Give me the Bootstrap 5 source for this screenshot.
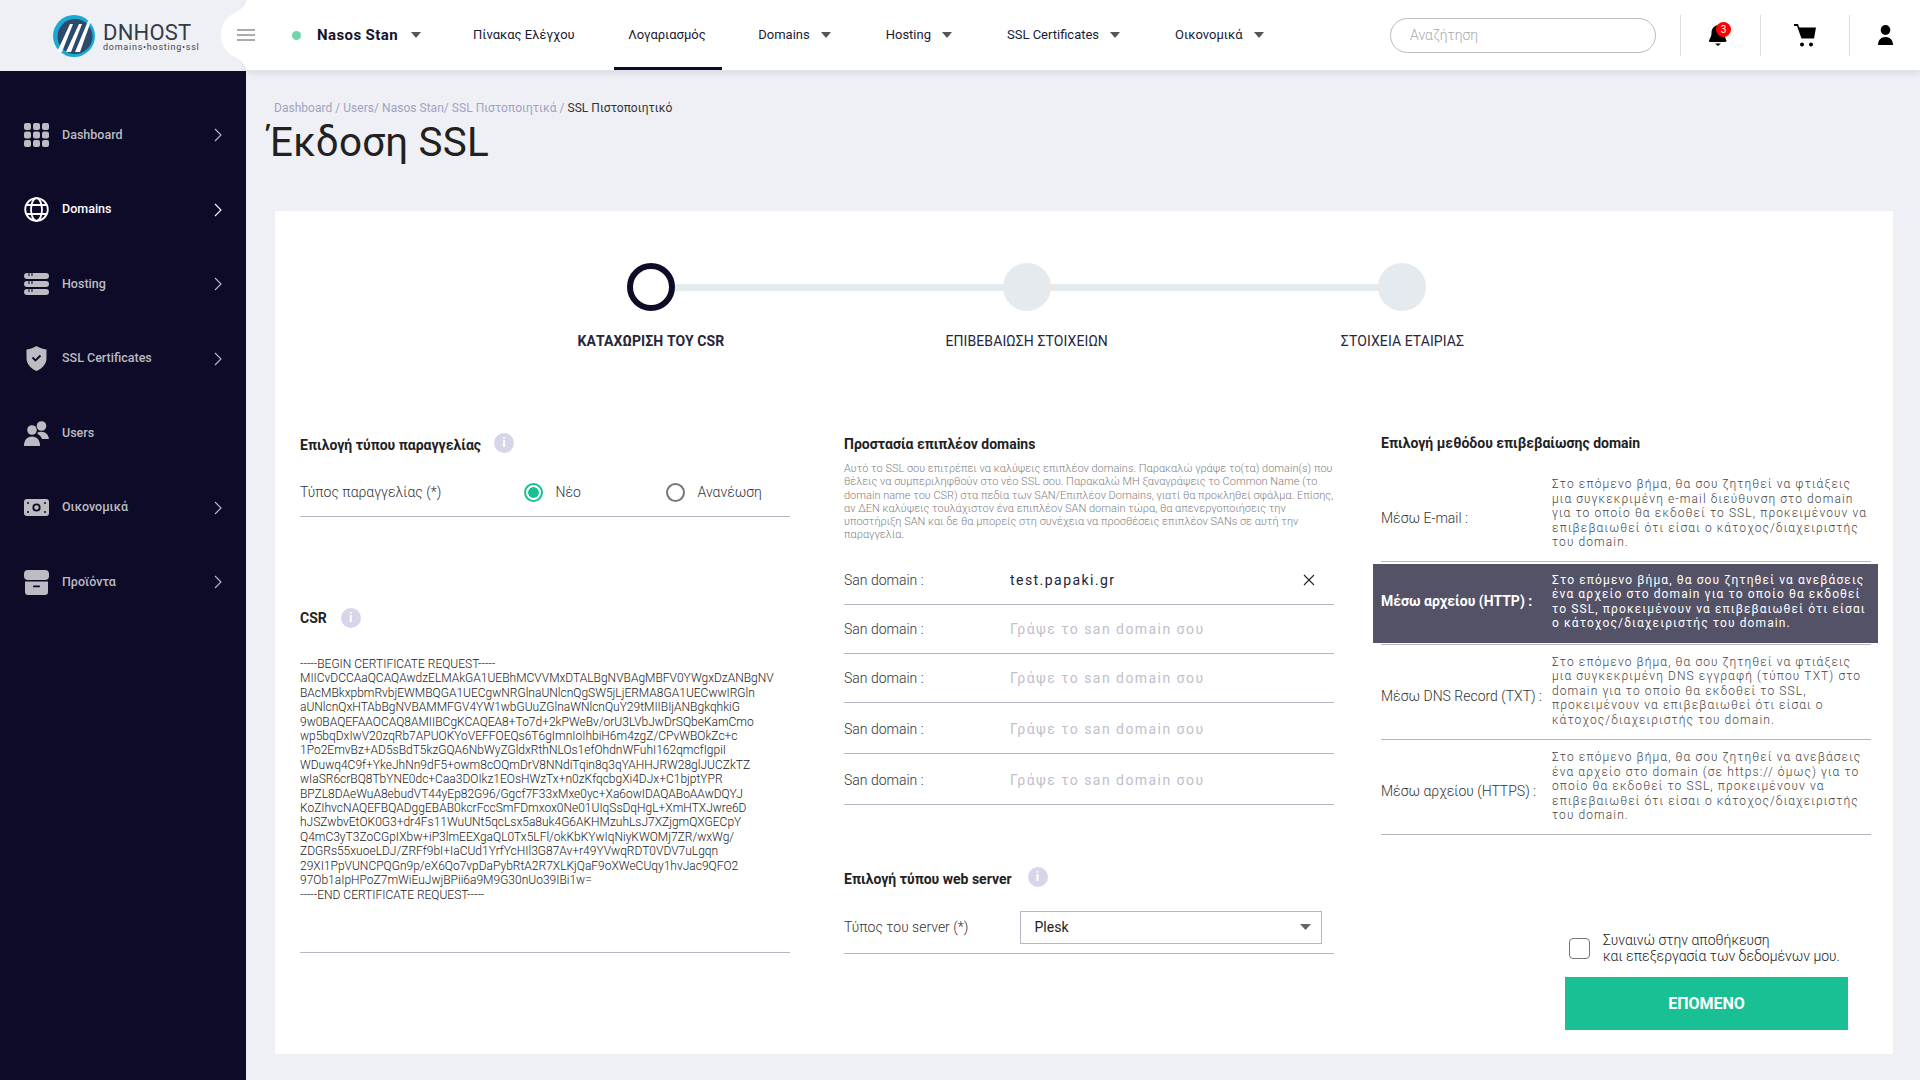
<!DOCTYPE html>
<html lang="el">
<head>
    <meta charset="UTF-8">
    <meta name="viewport" content="width=device-width, initial-scale=1.0">
    <title>Έκδοση SSL</title>
    <link href="https://cdn.jsdelivr.net/npm/bootstrap@5.3.3/dist/css/bootstrap.min.css" rel="stylesheet">
    <style>
        :root {
            --dark-navy: #0d0b27;
            --page-bg: #eef0f6;
            --line-color: #b5b5c3;
            --green: #19c093;
        }

        html, body {
            height: 100%;
        }

        body {
            background: var(--page-bg);
            font-family: Roboto, "Liberation Sans", sans-serif;
            font-size: 14px;
            color: #333;
            overflow: hidden;
        }

        /* Top bar */
        .top-bar {
            height: 70px;
            position: relative;
            z-index: 5;
        }

        .logo-area {
            width: 246px;
            height: 71px;
            padding-left: 53px;
            background: var(--page-bg);
        }

        .logo-words {
            padding-top: 4px;
        }

        .logo-name {
            font-size: 22px;
            line-height: 20px;
            color: #353b46;
            letter-spacing: 0.2px;
        }

        .logo-sub {
            font-size: 9px;
            line-height: 10px;
            color: #3f4652;
            letter-spacing: 0.75px;
            margin-top: -1px;
            white-space: nowrap;
        }

        .notch-shape {
            position: absolute;
            left: 216px;
            top: 0;
        }

        .top-nav {
            background: #fff;
            box-shadow: 0 2px 8px rgba(30, 30, 60, 0.12);
            min-width: 0;
        }

        .menu-lines {
            width: 18px;
            margin-left: -9px;
            margin-right: 37px;
            position: relative;
            z-index: 2;
        }

        .menu-lines span {
            display: block;
            height: 2px;
            background: #ababab;
            margin: 3px 0;
        }

        .status-dot {
            width: 9px;
            height: 9px;
            border-radius: 50%;
            background: #6fd6ab;
            margin-right: 16px;
        }

        .user-name {
            font-size: 15px;
            font-weight: 700;
            color: #15132e;
            letter-spacing: 0.4px;
            margin-right: 38px;
        }

        .top-bar .nav-link {
            height: 70px;
            padding: 0 14px;
            display: flex;
            align-items: center;
            font-size: 13px;
            color: #1b1a33;
            margin-right: 27px;
            white-space: nowrap;
        }

        .top-bar .nav-link.tab-first {
            margin-right: 25.5px;
        }

        .top-bar .nav-link.active-tab {
            box-shadow: inset 0 -3px 0 var(--dark-navy);
            padding-right: 16px;
            margin-right: 22.5px;
        }

        .dropdown-toggle::after {
            border-top: 6px solid #555;
            border-left: 5px solid transparent;
            border-right: 5px solid transparent;
            border-bottom: 0;
            margin-left: 11px;
        }

        .user-name.dropdown-toggle::after {
            margin-left: 13px;
            vertical-align: 2px;
        }

        .search-box {
            width: 266px;
            height: 35px;
            border: 1px solid #bbb;
            border-radius: 18px;
            padding: 0 19px;
            font-size: 14px;
            font-weight: 300;
            margin-right: 24px;
        }

        .search-box::placeholder {
            color: #a9a9ad;
        }

        .tool-slot {
            height: 41px;
            border-left: 1px solid #ddd;
            position: relative;
        }

        .slot-bell {
            width: 80px;
            padding-left: 28px;
        }

        .slot-cart {
            width: 89px;
            padding-left: 33px;
        }

        .slot-user {
            width: 71px;
            padding-left: 28px;
        }

        .bell-count {
            position: absolute;
            left: 35px;
            top: 7px;
            width: 15px;
            height: 15px;
            border-radius: 50%;
            background: #f00;
            color: #fff;
            font-size: 10px;
            line-height: 15px;
            text-align: center;
        }

        /* Sidebar */
        .side-menu {
            width: 246px;
            height: 1010px;
            background: var(--dark-navy);
            padding-top: 28px;
            flex-shrink: 0;
        }

        .side-item {
            height: 74.5px;
            padding: 0 24px;
            color: #bcbcc2;
            font-size: 12.5px;
            font-weight: 500;
            text-decoration: none;
        }

        .side-item.current {
            color: #fff;
        }

        .side-icon {
            width: 25px;
            margin-right: 13px;
            flex-shrink: 0;
        }

        .side-arrow {
            margin-left: auto;
        }

        /* Page */
        .page-body {
            padding: 30px 27px 0 28px;
            min-width: 0;
        }

        .crumbs {
            font-size: 12px;
            line-height: 16px;
            letter-spacing: 0.03px;
            color: #a3a2bd;
        }

        .crumbs span {
            color: #333;
        }

        .page-title {
            font-size: 40.4px;
            line-height: 44px;
            font-weight: 400;
            letter-spacing: 0.2px;
            color: #212121;
            margin: 5px 0 46px -6px;
        }

        .form-panel {
            height: 843px;
            margin-left: 1px;
            background: #fff;
            padding-top: 52px;
        }

        /* Stepper */
        .steps {
            margin-left: 188px;
            height: 169px;
        }

        .step-item {
            width: 375.8px;
            position: relative;
            text-align: center;
            font-size: 14px;
            letter-spacing: 0.1px;
            color: #26263a;
        }

        .step-item:not(:last-child)::after {
            content: "";
            position: absolute;
            left: 50%;
            top: 21px;
            width: 100%;
            height: 7px;
            background: #e4eaee;
        }

        .step-dot {
            width: 48px;
            height: 48px;
            border-radius: 50%;
            background: #e4eaee;
            margin: 0 auto 20px;
            position: relative;
            z-index: 1;
        }

        .step-item.current .step-dot {
            background: #fff;
            border: 6px solid var(--dark-navy);
        }

        .step-item.current {
            font-weight: 700;
        }

        /* Columns */
        .form-cols {
            padding-left: 25px;
        }

        .form-col {
            width: 490px;
            flex-shrink: 0;
        }

        .col-mid {
            margin-left: 54px;
        }

        .col-end {
            margin-left: 47px;
        }

        .block-title {
            height: 26px;
            font-size: 14px;
            font-weight: 700;
            color: #222;
        }

        .info-dot {
            width: 20px;
            height: 20px;
            border-radius: 50%;
            background: #d6d6e8;
            color: #fff;
            font-size: 13px;
            font-weight: 700;
            line-height: 20px;
            text-align: center;
            margin-left: 13px;
            margin-top: -5px;
        }

        .under-line {
            border-bottom: 1px solid var(--line-color);
        }

        .order-row {
            height: 49px;
            margin-top: 10px;
        }

        .field-label {
            font-weight: 300;
            color: #333;
        }

        .order-label {
            flex: 0 0 223.5px;
        }

        .order-option {
            margin: 0;
            padding: 0;
            min-height: 0;
            flex: 0 0 142px;
            font-weight: 300;
            color: #333;
        }

        .order-option .form-check-input {
            float: none;
            width: 19px;
            height: 19px;
            margin: 0 13px 0 0;
            border: 2px solid #777;
        }

        .order-option .form-check-input:checked {
            background-color: #fff;
            border-color: var(--green);
            background-image: radial-gradient(circle, var(--green) 0 5px, transparent 5.6px);
        }

        .csr-title {
            margin-top: 88px;
        }

        .csr-title .info-dot {
            margin: 0 0 0 14px;
        }

        .csr-text {
            font-size: 12px;
            line-height: 14.4px;
            font-weight: 300;
            color: #222;
            margin-top: 26px;
            padding-bottom: 50px;
            white-space: nowrap;
        }

        .san-title {
            height: 24px;
        }

        .san-intro {
            font-size: 11px;
            line-height: 13.3px;
            font-weight: 300;
            color: #7f7f7f;
            margin: 6px 0 17px;
            white-space: nowrap;
        }

        .san-row {
            height: 49px;
            padding-top: 2px;
        }

        .san-row.first-row {
            height: 46px;
            padding: 0 0 2px;
        }

        .san-row.tall-row {
            height: 51px;
            padding-top: 4px;
        }

        .san-label {
            width: 166px;
            flex-shrink: 0;
        }

        .san-input {
            border: 0;
            padding: 0;
            font-size: 14px;
            letter-spacing: 1.45px;
            color: #22213a;
            border-radius: 0;
        }

        .san-input:focus {
            box-shadow: none;
        }

        .san-input::placeholder {
            color: #c0c0cc;
        }

        .san-clear {
            width: 12px;
            margin: 0 19px 0 10px;
            flex-shrink: 0;
        }

        .server-title {
            margin-top: 62px;
        }

        .server-title .info-dot {
            margin-left: 16px;
        }

        .server-row {
            height: 52px;
            margin-top: 9px;
        }

        .server-label {
            width: 175.5px;
            flex-shrink: 0;
        }

        .server-select {
            width: 302px;
            height: 33px;
            border: 1px solid var(--line-color);
            border-radius: 0;
            padding: 0 14px;
            font-size: 14px;
            color: #222;
            background-size: 11px 6px;
            background-position: right 10px center;
            background-image: url("data:image/svg+xml,%3csvg xmlns='http://www.w3.org/2000/svg' viewBox='0 0 11 6'%3e%3cpath fill='%23666' d='M0 0h11L5.500 6z'/%3e%3c/svg%3e");
        }

        .method-title {
            height: 22px;
        }

        .method-row {
            height: 96px;
            margin-top: 12px;
        }

        .method-row.after-active {
            height: 95px;
            margin-top: 0;
            padding-bottom: 2px;
        }

        .method-row.last-row {
            height: 95px;
            margin-top: 0;
            padding-bottom: 1px;
        }

        .method-label {
            width: 171px;
            flex-shrink: 0;
            font-weight: 300;
            color: #333;
            padding-top: 10px;
            white-space: nowrap;
        }

        .method-text {
            font-size: 12px;
            line-height: 14.4px;
            font-weight: 300;
            letter-spacing: 1.1px;
            color: #444;
            white-space: nowrap;
        }

        .method-active {
            height: 79px;
            margin: 2px -7px 0 -8px;
            padding: 0 0 4px 8px;
            background: #545266;
        }

        .method-active .method-label {
            font-weight: 700;
            color: #fff;
            padding-top: 0;
        }

        .method-active .method-text {
            font-weight: 400;
            color: #fff;
        }

        .active-rule {
            border-bottom: 1px solid var(--line-color);
            height: 2px;
        }

        .agree-row {
            margin: 98px 0 13px 188px;
        }

        .agree-row .form-check-input {
            width: 21px;
            height: 21px;
            margin: 0 13px 0 0;
            float: none;
            border: 1px solid #777;
            border-radius: 4px;
            flex-shrink: 0;
        }

        .agree-row label {
            font-size: 14px;
            line-height: 15.5px;
            font-weight: 300;
            color: #222;
            white-space: nowrap;
        }

        .next-btn {
            width: 283px;
            height: 53px;
            margin-left: 184px;
            background: var(--green);
            border: 0;
            border-radius: 0;
            color: #fff;
            font-size: 16px;
            font-weight: 700;
        }
    </style>
</head>
<body>
    <header class="top-bar d-flex">
        <div class="logo-area d-flex align-items-center">
            <svg width="42" height="42" viewBox="0 0 42 42" class="me-2 flex-shrink-0">
                <circle cx="21" cy="21" r="21" fill="#19a9d3"/>
                <circle cx="22" cy="21.5" r="17.5" fill="#2d4a6b"/>
                <path d="M4 37 17 9h3L9 37zM13 37 26 9h3L18 37zM22 37 35 6h3L27 37z" fill="#fff"/>
            </svg>
            <div class="logo-words">
                <div class="logo-name">DNHOST</div>
                <div class="logo-sub">domains•hosting•ssl</div>
            </div>
        </div>
        <svg class="notch-shape" width="30" height="70" viewBox="0 0 30 70">
            <path d="M30 0C30 6 24 10 17 14 9 18 5 26 5 35 5 44 9 52 17 56 24 60 30 64 30 70Z" fill="#fff"/>
        </svg>
        <nav class="top-nav flex-grow-1 d-flex align-items-center">
            <div class="menu-lines"><span></span><span></span><span></span></div>
            <span class="status-dot"></span>
            <span class="user-name dropdown-toggle">Nasos Stan</span>
            <a class="nav-link tab-first" href="#">Πίνακας Ελέγχου</a>
            <a class="nav-link active-tab" href="#">Λογαριασμός</a>
            <a class="nav-link dropdown-toggle" href="#">Domains</a>
            <a class="nav-link dropdown-toggle" href="#">Hosting</a>
            <a class="nav-link dropdown-toggle" href="#">SSL Certificates</a>
            <a class="nav-link dropdown-toggle" href="#">Οικονομικά</a>
            <input class="search-box ms-auto" type="text" placeholder="Αναζήτηση">
            <div class="tool-slot slot-bell d-flex align-items-center">
                <svg width="18" height="21" viewBox="0 0 18 21" fill="#000">
                    <path d="M10 0C5 0 2.500 4 2.500 8c0 3.500-1.500 5-2.500 7.500 0 1 .5 1.500 1.500 1.500h14c1 0 2-.5 2-1.500-1-2-2-4-2-7.500 0-4-1.500-8-5.500-8z"/>
                    <path d="M6 18.500h6l-3 2.500z"/>
                </svg>
                <span class="bell-count">3</span>
            </div>
            <div class="tool-slot slot-cart d-flex align-items-center">
                <svg width="22" height="23" viewBox="0 0 22 23">
                    <path d="M0 0h4l1.300 3.500H22l-2 11H7.500L3 2H0z" fill="#000"/>
                    <circle cx="8" cy="20.500" r="2" fill="#000"/>
                    <circle cx="17" cy="20.500" r="2" fill="#000"/>
                </svg>
            </div>
            <div class="tool-slot slot-user d-flex align-items-center">
                <svg width="15" height="20" viewBox="0 0 15 20" fill="#000">
                    <ellipse cx="7.500" cy="5" rx="4.800" ry="5"/>
                    <path d="M0 20c0-5 3-8 7.500-8s7.500 3 7.500 8z"/>
                </svg>
            </div>
        </nav>
    </header>

    <div class="d-flex">
        <aside class="side-menu">
            <a class="side-item d-flex align-items-center" href="#">
                <svg class="side-icon" width="25" height="24" viewBox="0 0 25 24" fill="currentColor">
                    <rect x="0" y="0" width="7" height="7" rx="2"/><rect x="9" y="0" width="7" height="7" rx="2"/><rect x="18" y="0" width="7" height="7" rx="2"/>
                    <rect x="0" y="8.500" width="7" height="7" rx="2"/><rect x="9" y="8.500" width="7" height="7" rx="2"/><rect x="18" y="8.500" width="7" height="7" rx="2"/>
                    <rect x="0" y="17" width="7" height="7" rx="2"/><rect x="9" y="17" width="7" height="7" rx="2"/><rect x="18" y="17" width="7" height="7" rx="2"/>
                </svg>
                Dashboard
                <svg class="side-arrow" width="8" height="14" viewBox="0 0 8 14" fill="none" stroke="currentColor" stroke-width="1.100"><path d="M1 1l6 6-6 6"/></svg>
            </a>
            <a class="side-item current d-flex align-items-center" href="#">
                <svg class="side-icon" width="25" height="25" viewBox="0 0 25 25" fill="none" stroke="currentColor" stroke-width="1.800">
                    <circle cx="12.500" cy="12.500" r="11.300"/>
                    <ellipse cx="12.500" cy="12.500" rx="5.500" ry="11.300"/>
                    <path d="M2.500 8h20M2.500 17h20"/>
                </svg>
                Domains
                <svg class="side-arrow" width="8" height="14" viewBox="0 0 8 14" fill="none" stroke="currentColor" stroke-width="1.100"><path d="M1 1l6 6-6 6"/></svg>
            </a>
            <a class="side-item d-flex align-items-center" href="#">
                <svg class="side-icon" width="25" height="22" viewBox="0 0 25 22">
                    <rect y="0" width="25" height="6" rx="3" fill="currentColor"/>
                    <rect y="8" width="25" height="6" rx="3" fill="currentColor"/>
                    <rect y="16" width="25" height="6" rx="3" fill="currentColor"/>
                    <path d="M5 0v3M8 0v3M5 8v3M8 8v3M5 16v3M8 16v3" stroke="#0d0b27" stroke-width="1"/>
                </svg>
                Hosting
                <svg class="side-arrow" width="8" height="14" viewBox="0 0 8 14" fill="none" stroke="currentColor" stroke-width="1.100"><path d="M1 1l6 6-6 6"/></svg>
            </a>
            <a class="side-item d-flex align-items-center" href="#">
                <svg class="side-icon" width="25" height="25" viewBox="0 0 25 25">
                    <path d="M12.500 0c3 2 6 3 10 3.500V12c0 6-4 10.500-10 13C6.500 22.500 2.500 18 2.500 12V3.500C6.500 3 9.500 2 12.500 0z" fill="currentColor"/>
                    <path d="M8.500 11.500l3 3 5-5" fill="none" stroke="#0d0b27" stroke-width="1.800"/>
                </svg>
                SSL Certificates
                <svg class="side-arrow" width="8" height="14" viewBox="0 0 8 14" fill="none" stroke="currentColor" stroke-width="1.100"><path d="M1 1l6 6-6 6"/></svg>
            </a>
            <a class="side-item d-flex align-items-center" href="#">
                <svg class="side-icon" width="25" height="25" viewBox="0 0 25 25" fill="currentColor">
                    <circle cx="17.500" cy="5" r="4.800"/>
                    <circle cx="8" cy="9" r="4.800"/>
                    <path d="M0 25c0-6 3-9.500 8-9.500s8 3.500 8 9.500z"/>
                    <path d="M13.500 11.500c1-.5 2.500-.8 4-.8 4 0 7 3 7.500 7.300h-7c-1-2.500-2.500-4-4.500-5z"/>
                </svg>
                Users
            </a>
            <a class="side-item d-flex align-items-center" href="#">
                <svg class="side-icon" width="25" height="17" viewBox="0 0 25 17">
                    <rect width="25" height="17" rx="3" fill="currentColor"/>
                    <circle cx="12.500" cy="8.500" r="3.200" fill="none" stroke="#0d0b27" stroke-width="1.800"/>
                    <circle cx="4" cy="4" r="1" fill="#0d0b27"/><circle cx="21" cy="4" r="1" fill="#0d0b27"/>
                    <circle cx="4" cy="13" r="1" fill="#0d0b27"/><circle cx="21" cy="13" r="1" fill="#0d0b27"/>
                </svg>
                Οικονομικά
                <svg class="side-arrow" width="8" height="14" viewBox="0 0 8 14" fill="none" stroke="currentColor" stroke-width="1.100"><path d="M1 1l6 6-6 6"/></svg>
            </a>
            <a class="side-item d-flex align-items-center" href="#">
                <svg class="side-icon" width="25" height="25" viewBox="0 0 25 25">
                    <rect width="25" height="10" rx="4" fill="currentColor"/>
                    <path d="M1 11.500h23V22a3 3 0 0 1-3 3H4a3 3 0 0 1-3-3z" fill="currentColor"/>
                    <rect x="9" y="15.500" width="7" height="1.800" rx=".9" fill="#0d0b27"/>
                </svg>
                Προϊόντα
                <svg class="side-arrow" width="8" height="14" viewBox="0 0 8 14" fill="none" stroke="currentColor" stroke-width="1.100"><path d="M1 1l6 6-6 6"/></svg>
            </a>
        </aside>

        <main class="page-body flex-grow-1">
            <div class="crumbs">Dashboard / Users/ Nasos Stan/ SSL Πιστοποιητικά / <span>SSL Πιστοποιητικό</span></div>
            <h1 class="page-title">Έκδοση SSL</h1>

            <section class="form-panel">
                <div class="steps d-flex">
                    <div class="step-item current"><div class="step-dot"></div>ΚΑΤΑΧΩΡΙΣΗ ΤΟΥ CSR</div>
                    <div class="step-item"><div class="step-dot"></div>ΕΠΙΒΕΒΑΙΩΣΗ ΣΤΟΙΧΕΙΩΝ</div>
                    <div class="step-item"><div class="step-dot"></div>ΣΤΟΙΧΕΙΑ ΕΤΑΙΡΙΑΣ</div>
                </div>

                <div class="form-cols d-flex">
                    <div class="form-col">
                        <div class="block-title d-flex align-items-center">Επιλογή τύπου παραγγελίας<span class="info-dot">i</span></div>
                        <div class="order-row under-line d-flex align-items-center">
                            <span class="field-label order-label">Τύπος παραγγελίας (*)</span>
                            <label class="form-check order-option d-flex align-items-center">
                                <input class="form-check-input" type="radio" name="orderType" checked>Νέο
                            </label>
                            <label class="form-check order-option d-flex align-items-center">
                                <input class="form-check-input" type="radio" name="orderType">Ανανέωση
                            </label>
                        </div>
                        <div class="block-title csr-title d-flex align-items-center">CSR<span class="info-dot">i</span></div>
                        <div class="csr-text under-line">-----BEGIN CERTIFICATE REQUEST-----<br>MIICvDCCAaQCAQAwdzELMAkGA1UEBhMCVVMxDTALBgNVBAgMBFV0YWgxDzANBgNV<br>BAcMBkxpbmRvbjEWMBQGA1UECgwNRGlnaUNlcnQgSW5jLjERMA8GA1UECwwIRGln<br>aUNlcnQxHTAbBgNVBAMMFGV4YW1wbGUuZGlnaWNlcnQuY29tMIIBIjANBgkqhkiG<br>9w0BAQEFAAOCAQ8AMIIBCgKCAQEA8+To7d+2kPWeBv/orU3LVbJwDrSQbeKamCmo<br>wp5bqDxIwV20zqRb7APUOKYoVEFFOEQs6T6gImnIoIhbiH6m4zgZ/CPvWBOkZc+c<br>1Po2EmvBz+AD5sBdT5kzGQA6NbWyZGldxRthNLOs1efOhdnWFuhI162qmcfIgpiI<br>WDuwq4C9f+YkeJhNn9dF5+owm8cOQmDrV8NNdiTqin8q3qYAHHJRW28glJUCZkTZ<br>wIaSR6crBQ8TbYNE0dc+Caa3DOIkz1EOsHWzTx+n0zKfqcbgXi4DJx+C1bjptYPR<br>BPZL8DAeWuA8ebudVT44yEp82G96/Ggcf7F33xMxe0yc+Xa6owIDAQABoAAwDQYJ<br>KoZIhvcNAQEFBQADggEBAB0kcrFccSmFDmxox0Ne01UIqSsDqHgL+XmHTXJwre6D<br>hJSZwbvEtOK0G3+dr4Fs11WuUNt5qcLsx5a8uk4G6AKHMzuhLsJ7XZjgmQXGECpY<br>Q4mC3yT3ZoCGpIXbw+iP3lmEEXgaQL0Tx5LFl/okKbKYwIqNiyKWOMj7ZR/wxWg/<br>ZDGRs55xuoeLDJ/ZRFf9bI+IaCUd1YrfYcHIl3G87Av+r49YVwqRDT0VDV7uLgqn<br>29XI1PpVUNCPQGn9p/eX6Qo7vpDaPybRtA2R7XLKjQaF9oXWeCUqy1hvJac9QFO2<br>97Ob1aIpHPoZ7mWiEuJwjBPii6a9M9G30nUo39IBi1w=<br>-----END CERTIFICATE REQUEST-----</div>
                    </div>

                    <div class="form-col col-mid">
                        <div class="block-title san-title d-flex align-items-center">Προστασία επιπλέον domains</div>
                        <p class="san-intro">Αυτό το SSL σου επιτρέπει να καλύψεις επιπλέον domains. Παρακαλώ γράψε το(τα) domain(s) που<br>θέλεις να συμπεριληφθούν στο νέο SSL σου. Παρακαλώ ΜΗ ξαναγράψεις το Common Name (το<br>domain name του CSR) στα πεδία των SAN/Επιπλέον Domains, γιατί θα προκληθεί σφάλμα. Επίσης,<br>αν ΔΕΝ καλύψεις τουλάχιστον ένα επιπλέον SAN domain τώρα, θα απενεργοποιήσεις την<br>υποστήριξη SAN και δε θα μπορείς στη συνέχεια να προσθέσεις επιπλέον SANs σε αυτή την<br>παραγγελία.</p>
                        <div class="san-row first-row under-line d-flex align-items-center">
                            <span class="field-label san-label">San domain :</span>
                            <input class="form-control san-input" type="text" value="test.papaki.gr">
                            <svg class="san-clear" width="12" height="12" viewBox="0 0 12 12" fill="none" stroke="#222" stroke-width="1.100"><path d="M1 1l10 10M11 1L1 11"/></svg>
                        </div>
                        <div class="san-row under-line d-flex align-items-center">
                            <span class="field-label san-label">San domain :</span>
                            <input class="form-control san-input" type="text" placeholder="Γράψε το san domain σου">
                        </div>
                        <div class="san-row under-line d-flex align-items-center">
                            <span class="field-label san-label">San domain :</span>
                            <input class="form-control san-input" type="text" placeholder="Γράψε το san domain σου">
                        </div>
                        <div class="san-row tall-row under-line d-flex align-items-center">
                            <span class="field-label san-label">San domain :</span>
                            <input class="form-control san-input" type="text" placeholder="Γράψε το san domain σου">
                        </div>
                        <div class="san-row tall-row under-line d-flex align-items-center">
                            <span class="field-label san-label">San domain :</span>
                            <input class="form-control san-input" type="text" placeholder="Γράψε το san domain σου">
                        </div>
                        <div class="block-title server-title d-flex align-items-center">Επιλογή τύπου web server<span class="info-dot">i</span></div>
                        <div class="server-row under-line d-flex align-items-center">
                            <span class="field-label server-label">Τύπος του server (*)</span>
                            <select class="form-select server-select"><option>Plesk</option></select>
                        </div>
                    </div>

                    <div class="form-col col-end">
                        <div class="block-title method-title d-flex align-items-center">Επιλογή μεθόδου επιβεβαίωσης domain</div>
                        <div class="method-row under-line d-flex align-items-center">
                            <span class="method-label">Μέσω E-mail :</span>
                            <div class="method-text">Στο επόμενο βήμα, θα σου ζητηθεί να φτιάξεις<br>μια συγκεκριμένη e-mail διεύθυνση στο domain<br>για το οποίο θα εκδοθεί το SSL, προκειμένουν να<br>επιβεβαιωθεί ότι είσαι ο κάτοχος/διαχειριστής<br>του domain.</div>
                        </div>
                        <div class="method-active d-flex align-items-center">
                            <span class="method-label">Μέσω αρχείου (HTTP) :</span>
                            <div class="method-text">Στο επόμενο βήμα, θα σου ζητηθεί να ανεβάσεις<br>ένα αρχείο στο domain για το οποίο θα εκδοθεί<br>το SSL, προκειμένουν να επιβεβαιωθεί ότι είσαι<br>ο κάτοχος/διαχειριστής του domain.</div>
                        </div>
                        <div class="active-rule"></div>
                        <div class="method-row after-active under-line d-flex align-items-center">
                            <span class="method-label">Μέσω DNS Record (TXT) :</span>
                            <div class="method-text">Στο επόμενο βήμα, θα σου ζητηθεί να φτιάξεις<br>μια συγκεκριμένη DNS εγγραφή (τύπου TXT) στο<br>domain για το οποίο θα εκδοθεί το SSL,<br>προκειμένουν να επιβεβαιωθεί ότι είσαι ο<br>κάτοχος/διαχειριστής του domain.</div>
                        </div>
                        <div class="method-row last-row under-line d-flex align-items-center">
                            <span class="method-label">Μέσω αρχείου (HTTPS) :</span>
                            <div class="method-text">Στο επόμενο βήμα, θα σου ζητηθεί να ανεβάσεις<br>ένα αρχείο στο domain (σε https:// όμως) για το<br>οποίο θα εκδοθεί το SSL, προκειμένουν να<br>επιβεβαιωθεί ότι είσαι ο κάτοχος/διαχειριστής<br>του domain.</div>
                        </div>
                        <div class="agree-row d-flex align-items-center">
                            <input class="form-check-input" type="checkbox" id="agreeData">
                            <label for="agreeData">Συναινώ στην αποθήκευση<br>και επεξεργασία των δεδομένων μου.</label>
                        </div>
                        <button class="btn next-btn" type="button">ΕΠΟΜΕΝΟ</button>
                    </div>
                </div>
            </section>
        </main>
    </div>

    <script src="https://cdn.jsdelivr.net/npm/bootstrap@5.3.3/dist/js/bootstrap.bundle.min.js"></script>
</body>
</html>
